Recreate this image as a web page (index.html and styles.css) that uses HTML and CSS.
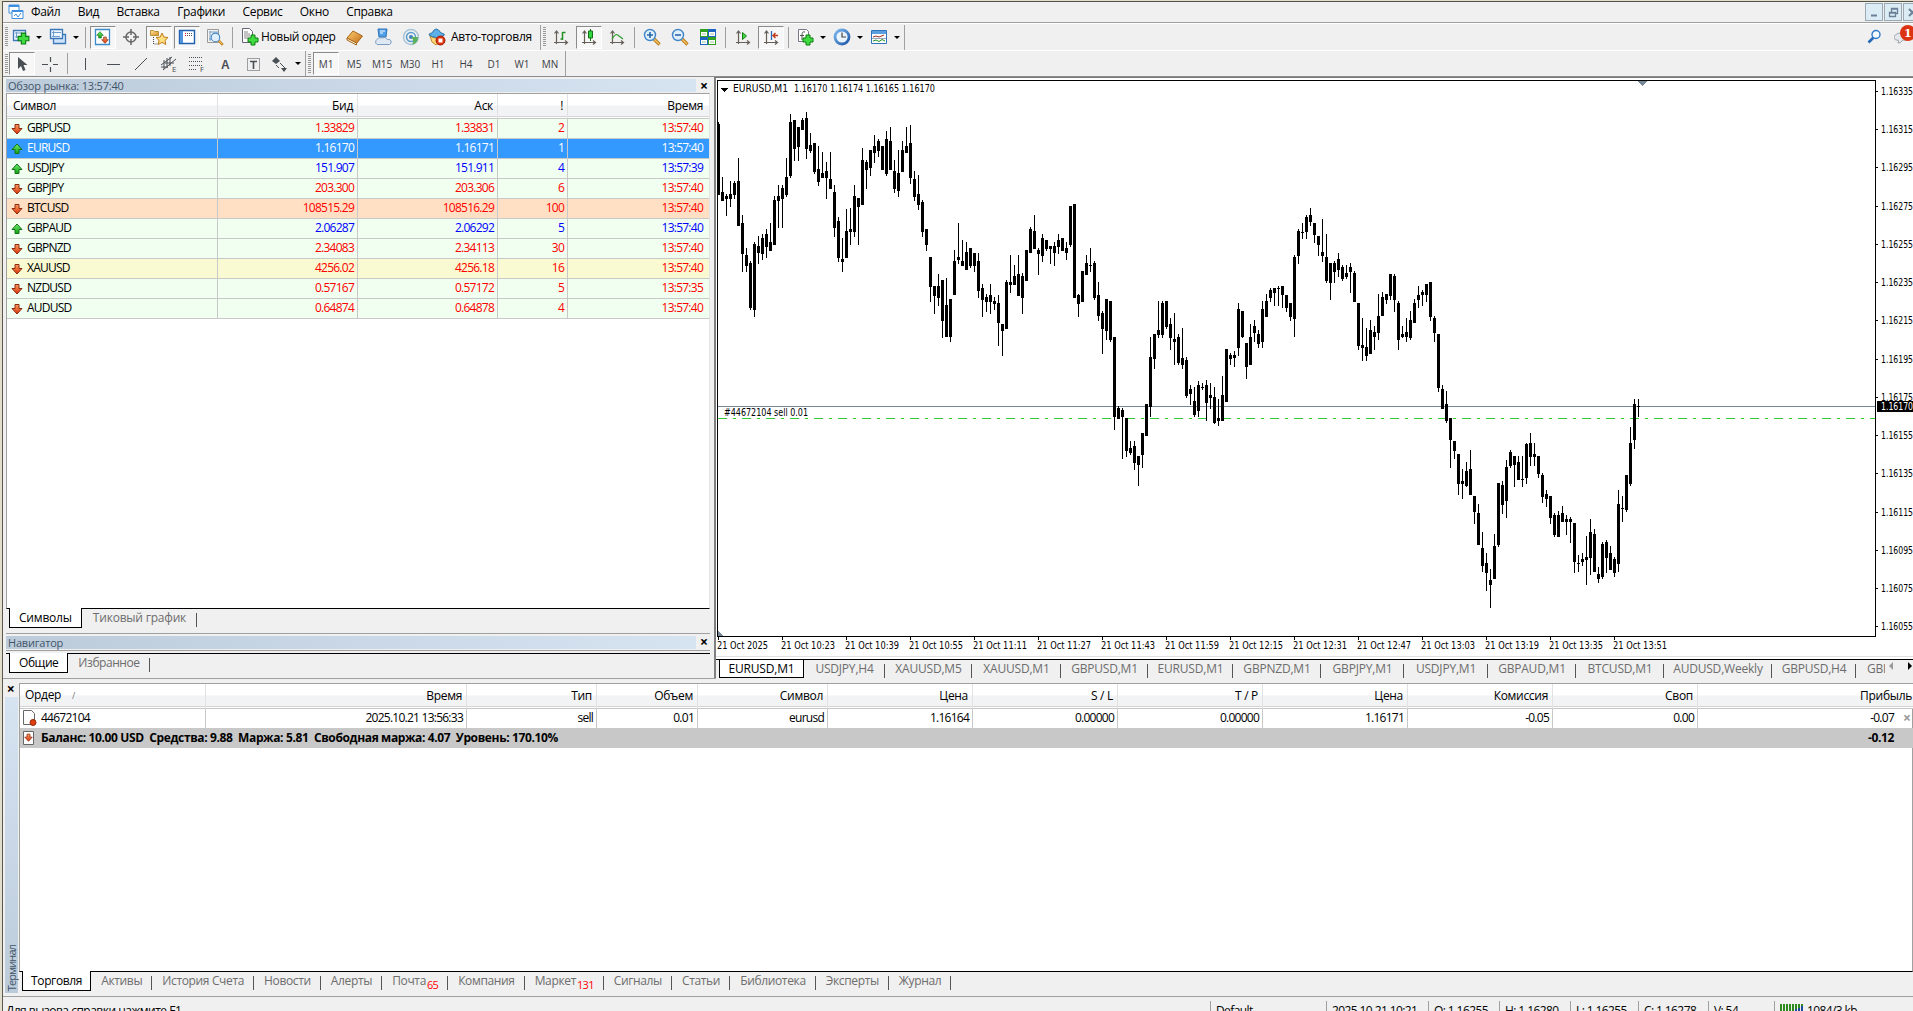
FILE: index.html
```html
<!DOCTYPE html>
<html lang="ru">
<head>
<meta charset="UTF-8" />
<title>Терминал</title>
<link rel="stylesheet" href="styles.css">
</head>
<body>

<svg class="defs" width="0" height="0">
  <defs>
    <linearGradient id="gRed" x1="0" y1="0" x2="0" y2="1"><stop offset="0" stop-color="#ffa060"/><stop offset="1" stop-color="#d83008"/></linearGradient>
    <linearGradient id="gGreen" x1="0" y1="0" x2="0" y2="1"><stop offset="0" stop-color="#70f070"/><stop offset="1" stop-color="#10a010"/></linearGradient>
    <linearGradient id="gGold" x1="0" y1="0" x2="1" y2="1"><stop offset="0" stop-color="#ffe9a0"/><stop offset="1" stop-color="#d88a20"/></linearGradient>
    <linearGradient id="gBook" x1="0" y1="0" x2="1" y2="1"><stop offset="0" stop-color="#ffd070"/><stop offset="1" stop-color="#c06a18"/></linearGradient>
    <linearGradient id="gBlue" x1="0" y1="0" x2="1" y2="1"><stop offset="0" stop-color="#7db8f0"/><stop offset="1" stop-color="#1c56a8"/></linearGradient>
    <symbol id="down" viewBox="0 0 12 12"><path d="M4 1.500h4v4h3L6 11 1 5.500h3z" fill="url(#gRed)" stroke="#8a2a10"/></symbol>
    <symbol id="up" viewBox="0 0 12 12"><path d="M4 10.500h4v-4h3L6 1 1 6.500h3z" fill="url(#gGreen)" stroke="#187018"/></symbol>
    <symbol id="plus" viewBox="0 0 12 12"><path d="M4 1h4v3h3v4H8v3H4V8H1V4h3z" fill="#3fdc3f" stroke="#0d7a12"/></symbol>
    <symbol id="axes" viewBox="0 0 18 18"><path d="M4.500 3v13M2 14.500h13M2.500 5.500l2-2.500 2 2.500M13 12.500l2.500 2-2.500 2" fill="none" stroke="#665f58" stroke-width="1.200"/></symbol>
    <symbol id="lens" viewBox="0 0 18 18"><path d="M10.500 10.500l6 6" stroke="#b87418" stroke-width="3.200"/><path d="M10.500 10.500l5.500 5.500" stroke="#f4c860" stroke-width="1.400"/><circle cx="7" cy="7" r="5.500" fill="#dff0fc" stroke="#3f86c8" stroke-width="1.400"/></symbol>
  </defs>
</svg>

<div class="app">
  <div class="menubar">
    <svg class="logo" width="16" height="16"><path d="M1 1h10v8H1z" fill="#fff" stroke="#3f8fe0"/><path d="M4 6.500h11v8H4z" fill="#fff" stroke="#3f8fe0"/><path d="M1 1h10v2H1zM4 6h11v2H4z" fill="#3f8fe0"/><path d="M6 12l2-2 2 3 3-4" fill="none" stroke="#3f8fe0"/></svg>
    <span>Файл</span><span>Вид</span><span>Вставка</span><span>Графики</span><span>Сервис</span><span>Окно</span><span>Справка</span>
    <div class="winbtns">
      <i><svg width="17" height="17"><path d="M5 11.500h6" stroke="#6a8098" stroke-width="2"/></svg></i>
      <i><svg width="17" height="17"><path d="M4.500 8.500h6v4h-6zM6.500 8V4.500h6v5H11M4.500 9h6M6.500 5h6" fill="none" stroke="#6a8098" stroke-width="1.300"/></svg></i>
      <i><svg width="17" height="17"><path d="M5 5l7 7M12 5l-7 7" stroke="#6a8098" stroke-width="2"/></svg></i>
    </div>
  </div>

  <div class="toolbar first">
    <i class="grip"></i>
    <b class="dd"><svg width="18" height="18"><path d="M1.500 2.500h12v10h-12z" fill="#eef6ff" stroke="#3c78b8" stroke-width="1.300"/><path d="M3 5h7M4.500 4v6M3 9h6" stroke="#6d9ccc"/><use href="#plus" x="5" y="4" width="13" height="13"/></svg></b>
    <b class="dd"><svg width="18" height="18"><path d="M4.500 6.500h12v9h-12z" fill="#cfe4fa" stroke="#3c78b8" stroke-width="1.300"/><path d="M1.500 1.500h12v9h-12z" fill="#eef6ff" stroke="#3c78b8" stroke-width="1.300"/><path d="M3 4.500h9M4.500 3v6M3 8.500h8" stroke="#6d9ccc"/></svg></b>
    <i class="sep"></i>
    <b class="tb on"><svg width="18" height="18"><path d="M1.500 1.500h14v15h-14z" fill="#fff" stroke="#3c8ccc" stroke-width="1.300"/><use href="#up" x="2" y="3" width="8" height="8"/><use href="#down" x="7" y="8" width="8" height="8"/></svg></b>
    <b class="tb"><svg width="18" height="18"><circle cx="9" cy="9" r="5" fill="none" stroke="#666" stroke-width="1.500"/><path d="M9 1v6M9 11v6M1 9h6M11 9h6" stroke="#666" stroke-width="1.500"/></svg></b>
    <b class="tb on"><svg width="20" height="18"><path d="M1.500 2.500h3l1 1h4v4h-8z" fill="url(#gGold)" stroke="#b8903c"/><path d="M4.500 9v7h5" fill="none" stroke="#444" stroke-dasharray="1 1"/><path d="M13 5l1.800 4 4.200.5-3 2.800.8 4.200L13 14.400 9.200 16.500l.8-4.200-3-2.800 4.200-.5z" fill="#ffdf80" stroke="#c07a18"/></svg></b>
    <b class="tb on"><svg width="18" height="18"><path d="M1.500 2.500h15v13h-15z" fill="#fff" stroke="#1f5fae" stroke-width="1.400"/><path d="M2 3h3v12H2z" fill="#4f94e0"/><path d="M7 5.500h8M7 7.500h8" stroke="#555" stroke-dasharray="1 1"/><path d="M7 5.500h1M7 7.500h1" stroke="#e02020" /></svg></b>
    <b class="tb"><svg width="18" height="18"><path d="M1.500 1.500h11v13h-11z" fill="#f4f4ec" stroke="#999"/><path d="M3 4h9M4 3v10M3 11h6" stroke="#7aa0d0"/><use href="#lens" x="4" y="4" width="14" height="14"/></svg></b>
    <i class="sep"></i>
    <b class="wide"><svg width="18" height="18"><path d="M1.500.5h7l3 3v11h-10z" fill="#fff" stroke="#667"/><path d="M3 4h4M3 6h6M3 8h6M3 10h4" stroke="#888"/><use href="#plus" x="6" y="6" width="12" height="12"/></svg>Новый ордер</b>
    <b class="tb"><svg width="18" height="18"><path d="M1 10l6-7 9.500 5-6 7.500z" fill="url(#gBook)" stroke="#a86418"/><path d="M1 10v2l9.500 5v-2z" fill="#fff4d0" stroke="#a86418"/></svg></b>
    <b class="tb"><svg width="18" height="18"><path d="M4 1h9l-1 8H5z" fill="#4fa0e8" stroke="#2f74b8"/><path d="M6 3h5M6 5h3" stroke="#fff"/><path d="M3 16.500a3 3 0 010-5q1.500-3 4.500-1.500 4-2 6 1.500a2.500 2.500 0 012 5z" fill="#e0e8f4" stroke="#7a9cc0"/></svg></b>
    <b class="tb"><svg width="18" height="18"><g fill="none"><circle cx="9" cy="9" r="7.500" stroke="#a8c4d8" stroke-width="1.500"/><circle cx="9" cy="9" r="4.500" stroke="#5c9ccc" stroke-width="1.500"/></g><circle cx="9" cy="9" r="2" fill="#3c80c0"/><path d="M9 9q4 3 1 8 6-2 6-8z" fill="#58b058"/></svg></b>
    <b class="auto"><svg width="18" height="18"><path d="M2 8q6 4 13 0l-2 6-5 3-4-3z" fill="#ffd878" stroke="#c08a28"/><path d="M1 7q0-2 3-2 4-8 9 0 3 0 3.500 2-8 5-15.500 0z" fill="#5fb0e8" stroke="#2f74a8"/><circle cx="12.500" cy="12.500" r="4.500" fill="#e03010" stroke="#a02008"/><path d="M10.500 10.500h4v4h-4z" fill="#fff"/></svg>Авто-торговля</b>
    <i class="end"></i><i class="grip"></i>
    <b class="tb"><svg width="18" height="18"><use href="#axes"/><path d="M10.500 4v8M10.500 11h-2M10.500 4.500h3" fill="none" stroke="#259025" stroke-width="1.500"/></svg></b>
    <b class="tb on"><svg width="18" height="18"><use href="#axes"/><path d="M10.500 1v12" stroke="#167016"/><path d="M8.500 3h4v7h-4z" fill="#30d840" stroke="#167016"/></svg></b>
    <b class="tb"><svg width="18" height="18"><use href="#axes"/><path d="M4 11q4-7 7-3l4 3" fill="none" stroke="#30a030" stroke-width="1.300"/></svg></b>
    <i class="sep"></i>
    <b class="tb"><svg width="18" height="18"><use href="#lens"/><path d="M4 7h6M7 4v6" stroke="#2868a8" stroke-width="1.600"/></svg></b>
    <b class="tb"><svg width="18" height="18"><use href="#lens"/><path d="M4 7h6" stroke="#2868a8" stroke-width="1.600"/></svg></b>
    <b class="tb"><svg width="18" height="18"><path d="M1 1h8v8H1zM9 9h8v8H9z" fill="#30a020"/><path d="M9 1h8v8H9zM1 9h8v8H1z" fill="#1f64c0"/><path d="M2 4h6v4H2zM10 4h6v4h-6zM2 12h6v4H2zM10 12h6v4h-6z" fill="#fff"/><path d="M3 6h4M11 6h4M3 14h4M11 14h4" stroke="#9bc49b"/></svg></b>
    <i class="sep"></i>
    <b class="tb"><svg width="18" height="18"><use href="#axes"/><path d="M8.500 4.500l4 3.500-4 3.500z" fill="#40d840" stroke="#168016"/></svg></b>
    <b class="tb on"><svg width="18" height="18"><use href="#axes"/><path d="M9.500 3v9" stroke="#2868b8" stroke-width="1.300"/><path d="M16 7.500h-4M13.500 5l-2.500 2.500 2.500 2.500" fill="none" stroke="#c03818" stroke-width="1.400"/></svg></b>
    <i class="sep"></i>
    <b class="dd"><svg width="18" height="18"><path d="M2.500 1.500h8l2 2v10h-10z" fill="#fff" stroke="#778"/><path d="M9 4q-3-1-3 3v5M4 7.500h4" fill="none" stroke="#555"/><use href="#plus" x="6" y="6" width="12" height="12"/></svg></b>
    <b class="dd"><svg width="18" height="18"><circle cx="9" cy="9" r="7" fill="#eaf4ff" stroke="url(#gBlue)" stroke-width="2.800"/><path d="M9 4.500V9h4" fill="none" stroke="#444" stroke-width="1.200"/></svg></b>
    <b class="dd"><svg width="18" height="18"><path d="M1.500 2.500h15v13h-15z" fill="#fff" stroke="#2f74b8"/><path d="M2 3h14v3H2z" fill="#5a9fe0"/><path d="M3 9l3-1 3 1 5-2" fill="none" stroke="#a03020"/><path d="M3 13l3-1 3 1.500 3-2 3 1.500" fill="none" stroke="#209020"/><path d="M2 10.500h14" stroke="#9ab"/></svg></b>
    <i class="end"></i>
    <div class="notify">
      <svg width="16" height="16"><path d="M1.500 13.500l5-5" stroke="#2468b8" stroke-width="2.600"/><circle cx="9" cy="5.500" r="4" fill="#f6faff" stroke="#2f78c8" stroke-width="1.400"/></svg>
      <svg class="chat" width="24" height="24"><path d="M0 15q0-4 6-5h7v7H9q-3 4-5 3l.5-2.500Q0 17 0 15z" fill="#e4e8ee" stroke="#a0a4aa"/><circle cx="14" cy="10" r="8" fill="#dc3412"/><text x="10" y="14" class="badge">1</text></svg>
    </div>
  </div>

  <div class="toolbar second">
    <i class="grip"></i>
    <b class="tb on"><svg width="18" height="18"><path d="M5 2v12l3-3 2 5 2.500-1-2-5h4z" fill="#4a4f55"/></svg></b>
    <b class="tb"><svg width="18" height="18"><path d="M9.500 2v5M9.500 12v5M1 9.500h6M12 9.500h5" stroke="#4a4f55" stroke-width="1.200"/></svg></b>
    <i class="sep"></i>
    <b class="tb"><svg width="18" height="18"><path d="M9.500 3v12" stroke="#4a4f55"/></svg></b>
    <b class="tb"><svg width="18" height="18"><path d="M3 9.500h13" stroke="#4a4f55"/></svg></b>
    <b class="tb"><svg width="18" height="18"><path d="M3 15L15 3" stroke="#4a4f55"/></svg></b>
    <b class="tb"><svg width="18" height="18"><path d="M1 10l11-8M3 15L16 4M4 5v9M7 3v10M10 2v9M1 12h7M5 8h9" stroke="#4a4f55"/><text x="12" y="17" class="mini">E</text></svg></b>
    <b class="tb"><svg width="18" height="18"><path d="M1 2.500h14M1 6.500h14M1 10.500h14M1 14.500h8" stroke="#4a4f55" stroke-dasharray="1 1"/><text x="12" y="17" class="mini">F</text></svg></b>
    <b class="tb"><svg width="18" height="18"><text x="5" y="14" class="glyph">A</text></svg></b>
    <b class="tb"><svg width="18" height="18"><path d="M3.500 3.500h12v12h-12z" fill="none" stroke="#4a4f55" stroke-dasharray="1 1"/><path d="M6 6.500h7M9.500 6v8" stroke="#4a4f55" stroke-width="1.600"/></svg></b>
    <b class="dd"><svg width="18" height="18"><path d="M1 6l4-4 4 4-4 3zM10 13h6l-3 4z" fill="#4a4f55"/><path d="M5 10l3 3M9 8l5 5" stroke="#4a4f55"/></svg></b>
    <i class="end"></i><i class="grip"></i>
    <b class="tb on">M1</b><b class="tb">M5</b><b class="tb">M15</b><b class="tb">M30</b><b class="tb">H1</b><b class="tb">H4</b><b class="tb">D1</b><b class="tb">W1</b><b class="tb">MN</b>
    <i class="end"></i>
  </div>

  <div class="workspace">
    <div class="dock">
      <div class="caption"><span>Обзор рынка: 13:57:40</span><em>×</em></div>
      <div class="watch">
        <table>
          <colgroup><col class="w1"><col class="w2"><col class="w2"><col class="w3"><col class="w4"></colgroup>
          <thead><tr><th>Символ</th><th>Бид</th><th>Аск</th><th>!</th><th>Время</th></tr></thead>
          <tbody id="quotes"></tbody>
        </table>
      </div>
      <div class="tabs"><span class="active">Символы</span><span>Тиковый график</span></div>
      <div class="caption nav"><span>Навигатор</span><em>×</em></div>
      <div class="tabs navtabs"><span class="active">Общие</span><span>Избранное</span></div>
    </div>

    <div class="chartpane">
      <svg id="chart" width="1197" height="581" viewBox="716 78 1197 581"></svg>
      <div class="tabs charttabs">
        <span class="active">EURUSD,M1</span><span>USDJPY,H4</span><span>XAUUSD,M5</span><span>XAUUSD,M1</span><span>GBPUSD,M1</span><span>EURUSD,M1</span><span>GBPNZD,M1</span><span>GBPJPY,M1</span><span>USDJPY,M1</span><span>GBPAUD,M1</span><span>BTCUSD,M1</span><span>AUDUSD,Weekly</span><span>GBPUSD,H4</span><span>GBPUSD</span>
        <div class="scroller"><svg width="28" height="12"><path d="M8 1v8L4 5z" fill="#999"/><path d="M23 1v8l4-4z" fill="#000"/></svg></div>
      </div>
    </div>
  </div>

  <div class="terminal">
    <div class="side"><em>×</em><div><span>Терминал</span></div></div>
    <div class="orders">
      <div class="grid">
        <table>
          <colgroup><col class="t1"><col class="t2"><col class="t3"><col class="t4"><col class="t3"><col class="t5"><col class="t5"><col class="t5"><col class="t5"><col class="t5"><col class="t5"><col class="t6"></colgroup>
          <thead><tr><th>Ордер <i class="sort">/</i></th><th>Время</th><th>Тип</th><th>Объем</th><th>Символ</th><th>Цена</th><th>S / L</th><th>T / P</th><th>Цена</th><th>Комиссия</th><th>Своп</th><th>Прибыль</th></tr></thead>
          <tbody>
            <tr><td><svg width="16" height="16"><path d="M1.500.5h8l3 3v11h-11z" fill="#fff" stroke="#666"/><circle cx="11" cy="12.500" r="3" fill="#e04010" stroke="#902808"/></svg>44672104</td><td>2025.10.21 13:56:33</td><td>sell</td><td>0.01</td><td>eurusd</td><td>1.16164</td><td>0.00000</td><td>0.00000</td><td>1.16171</td><td>-0.05</td><td>0.00</td><td>-0.07<em>×</em></td></tr>
            <tr class="balance"><td colspan="11"><svg width="16" height="16"><path d="M1.500 1.500h10v13h-10z" fill="#fff" stroke="#666"/><use href="#down" x="2" y="3" width="9" height="9"/></svg>Баланс: 10.00 USD&nbsp; Средства: 9.88&nbsp; Маржа: 5.81&nbsp; Свободная маржа: 4.07&nbsp; Уровень: 170.10%</td><td>-0.12</td></tr>
          </tbody>
        </table>
      </div>
      <div class="tabs termtabs">
        <span class="active">Торговля</span><span>Активы</span><span>История Счета</span><span>Новости</span><span>Алерты</span><span>Почта<sub>65</sub></span><span>Компания</span><span>Маркет<sub>131</sub></span><span>Сигналы</span><span>Статьи</span><span>Библиотека</span><span>Эксперты</span><span>Журнал</span>
      </div>
    </div>
  </div>

  <div class="status">
    <span>Для вызова справки нажмите F1</span><span>Default</span><span>2025.10.21 10:21</span><span>O: 1.16255</span><span>H: 1.16280</span><span>L: 1.16255</span><span>C: 1.16278</span><span>V: 54</span>
    <span><svg width="24" height="16"><path d="M1 0v12M4 0v12M7 0v12M10 0v12M13 0v8M16 0v6M19 0v4M22 0v2" stroke="#2f8a1f" stroke-width="2"/><path d="M10 9v4M13 7v6M16 5v8M19 4v9M22 2v11" stroke="#1f4a9a" stroke-width="2"/></svg>1084/3 kb</span>
  </div>
</div>

<script src="chart.js"></script>
</body>
</html>
```
FILE: styles.css
```css
* { box-sizing: border-box; }

html { background: #e2dece; }
body {
  margin: 0;
  width: 1913px;
  height: 1011px;
  overflow: hidden;
  font: 12px/16px "Open Sans", "Noto Sans", sans-serif;
  letter-spacing: -0.3px;
  color: #000;
}

.defs { position: absolute; }
i, em { font-style: normal; }
b { font-weight: normal; }

.app {
  display: flex;
  flex-direction: column;
  height: 1020px;
  background: #f0f0f0;
  border-top: 1px solid #55524a;
  border-left: 1px solid #5c584e;
  margin: 1px 0 0 2px;
}

/* Меню */
.menubar {
  display: flex;
  align-items: center;
  height: 21px;
  flex: none;
  padding-left: 5px;
  border-bottom: 1px solid #a0a0a0;
}
.logo { margin-right: 7px; }
.menubar span { margin-right: 17.500px; letter-spacing: -0.35px; }
.winbtns { display: flex; gap: 1px; margin-left: auto; margin-right: -8px; }
.winbtns i {
  width: 18px;
  height: 18px;
  background: #dcecf5;
  border: 1px solid #9aa8b4;
}
.winbtns svg { display: block; }

/* Панели инструментов */
.toolbar {
  display: flex;
  align-items: center;
  flex: none;
  border-top: 1px solid #fff;
}
.first { height: 27px; }
.second { height: 27px; border-bottom: 1px solid #8c8c8c; }
.grip {
  width: 3px;
  height: 20px;
  margin: 0 1px 0 2px;
  background: repeating-linear-gradient(#999 0 1px, #f0f0f0 1px 2px);
}
.tb, .wide, .auto, .dd {
  display: flex;
  align-items: center;
  justify-content: center;
  height: 24px;
  width: 28px;
  flex: none;
}
.tb svg, .wide svg, .auto svg, .dd svg { flex: none; }
.on {
  width: 26px;
  margin: 0 1px;
  height: 23px;
  border: 1px solid;
  border-color: #8c8c8c #fff #fff #8c8c8c;
  background: #f7f7f7;
}
.dd { width: 37px; justify-content: flex-start; padding-left: 4px; }
.dd::after {
  content: "";
  margin-left: 6px;
  border: 3px solid transparent;
  border-top-color: #000;
  border-bottom: 0;
}
.first .wide { width: 105px; justify-content: flex-start; padding-left: 5px; gap: 2px; letter-spacing: -0.35px; }
.first .auto { width: 114px; justify-content: flex-start; padding-left: 3px; gap: 5px; letter-spacing: -0.25px; }
.wide, .auto { white-space: nowrap; }
.sep { width: 1px; height: 21px; margin: 0 3px; background: #a0a0a0; }
.end { width: 1px; height: 25px; background: #a0a0a0; margin-left: 1px; }
.first .grip:first-child, .second .grip:first-child { margin-right: 0; }
.second .tb { font-size: 10px; color: #3c4046; letter-spacing: -0.1px; }
.mini { font: 7px "DejaVu Sans", sans-serif; fill: #4a4f55; }
.glyph { font: bold 12px "Liberation Sans", sans-serif; fill: #4a4f55; }
.notify { display: flex; align-items: center; gap: 11px; margin-left: auto; margin-right: -5px; }
.chat { margin-top: -4px; }
.badge { font: bold 11px "DejaVu Serif", serif; fill: #fff; }

/* Рабочая область */
.workspace { display: flex; height: 601px; flex: none; }
.dock {
  width: 711px;
  padding: 2px 4px 0 3px;
  display: flex;
  flex-direction: column;
}
.caption {
  display: flex;
  align-items: center;
  height: 13px;
  flex: none;
  color: #3f5468;
  letter-spacing: -0.2px;
  font-size: 11px;
}
.caption span {
  width: 690px;
  height: 13px;
  line-height: 13px;
  padding-left: 2px;
  background: linear-gradient(90deg, #bccbda, #d6e4f2);
}
em { font-weight: bold; font-size: 14px; color: #000; line-height: 12px; }
.caption em { margin-left: 4px; }

.watch {
  height: 516px;
  flex: none;
  margin-top: 1px;
  border: 1px solid #a0a0a0;
  border-right-color: #e4e4e4;
  border-bottom: 1px solid #000;
  background: #fff;
}
table { border-collapse: separate; border-spacing: 0; table-layout: fixed; }
.watch table { width: 702px; }
.w1 { width: 211px; } .w2 { width: 140px; } .w3 { width: 70px; } .w4 { width: 141px; }
th {
  height: 25px;
  padding: 0 4px 1px;
  font-weight: normal;
  text-align: right;
  border-right: 1px solid #e2e2e2;
  border-bottom: 1px solid #c8c8c8;
  background: linear-gradient(#fff 45%, #f2f3f5 50%, #f2f3f5 22px, #d5d5d5 22px, #d5d5d5 23px, #fff 23px);
}
th:first-child { text-align: left; padding-left: 6px; }
td {
  height: 20px;
  padding: 0 3px 1px;
  text-align: right;
  white-space: nowrap;
  border-right: 1px solid #c8c8c8;
  border-bottom: 1px solid #c8c8c8;
  letter-spacing: -0.75px;
}
td:first-child { text-align: left; color: #000; }
td:last-child, th:last-child { border-right: 0; padding-right: 6px; }
td svg { vertical-align: middle; }
.watch td { background: #f0fff0; color: #f00; }
.watch td:first-child { padding-left: 4px; color: #000; }
.watch td svg { margin: 1px 4px 0 0; }
.watch tr.rise td:not(:first-child) { color: #00f; }
.watch tr.btc td { background: #ffe0c4; }
.watch tr.gold td { background: #fafad2; }
.watch tbody tr.selected td,
.watch tbody tr.selected td:first-child { background: #3399ff; color: #fff; }

/* Вкладки */
.tabs { display: flex; height: 24px; flex: none; color: #6d6d6d; padding-left: 3px; }
.tabs span {
  position: relative;
  height: 19px;
  line-height: 18px;
  padding: 0 11px;
  white-space: nowrap;
  letter-spacing: -0.2px;
}
.tabs span:not(.active)::after {
  content: "";
  position: absolute;
  right: 0;
  top: 4px;
  height: 14px;
  border-right: 1px solid #555;
}
.tabs .active {
  margin-top: -1px;
  height: 20px;
  line-height: 19px;
  padding: 0 9px;
  color: #000;
  background: #fff;
  border: 1px solid #000;
  border-top: 0;
}
.nav { height: 18px; padding: 2px 0; border: solid #a0a0a0; border-width: 1px 0; }
.navtabs { margin-top: 2px; border-top: 1px solid #000; height: 25px; }
.navtabs span { padding: 0 10px; letter-spacing: -0.45px; }

/* График */
.chartpane {
  width: 1199px;
  border-left: 2px solid #808080;
  background: #fff;
  border-top: 1px solid #777;
}
#chart { display: block; }
#chart text { font-family: "DejaVu Sans Condensed", "DejaVu Sans", sans-serif; font-size: 10px; font-stretch: condensed; letter-spacing: 0; }
.charttabs { position: relative; background: #f0f0f0; border-top: 1px solid #000; padding-left: 3px; height: 20px; overflow: hidden; }
.charttabs span { text-align: center; padding: 0; flex: none; }
.charttabs .active { padding: 0; width: 85px; margin-top: 0; height: 18px; line-height: 18px; }
.charttabs span:nth-child(2) { width: 81px; }
.charttabs span:nth-child(3) { width: 87px; }
.charttabs span:nth-child(4) { width: 89px; }
.charttabs span:nth-child(5) { width: 87px; }
.charttabs span:nth-child(6) { width: 85px; }
.charttabs span:nth-child(7) { width: 88px; }
.charttabs span:nth-child(8) { width: 83px; }
.charttabs span:nth-child(9) { width: 84px; }
.charttabs span:nth-child(10), .charttabs span:nth-child(11) { width: 88px; }
.charttabs span:nth-child(12) { width: 108px; }
.charttabs span:nth-child(13) { width: 84px; }
.charttabs span:nth-child(14) { width: 70px; text-align: left; padding-left: 11px; }
.scroller { position: absolute; right: 0; top: 1px; width: 28px; height: 16px; background: #f0f0f0; }

/* Терминал */
.terminal { display: flex; height: 318px; flex: none; border-top: 1px solid #a0a0a0; padding-top: 4px; }
.side { width: 16px; padding: 0 1px 0 2px; display: flex; flex-direction: column; }
.side em { height: 14px; text-align: center; margin-left: -2px; }
.side div {
  flex: 1;
  display: flex;
  align-items: flex-end;
  padding-bottom: 2px;
  margin-bottom: 3px;
  background: linear-gradient(#d6e4f2, #bccbda);
}
.side span {
  writing-mode: vertical-rl;
  transform: rotate(180deg);
  font-size: 11px;
  line-height: 13px;
  letter-spacing: -0.9px;
  color: #3f5468;
}
.orders { width: 1894px; overflow: hidden; }
.grid { height: 289px; border: 1px solid #a0a0a0; border-bottom-color: #000; background: #fff; }
.grid table { width: 1920px; }
.t1 { width: 186px; } .t2 { width: 261px; } .t3 { width: 130px; } .t4 { width: 101px; } .t5 { width: 145px; } .t6 { width: 242px; }
.grid td { height: 19px; border-bottom: 0; }
.grid th:first-child { padding-left: 5px; }
.grid td:first-child { padding-left: 2px; }
.grid td svg { margin: 0 3px 0 0; }
.grid td:last-child { padding-right: 46px; }
.grid th:last-child { padding-right: 28px; }
.grid td em { position: absolute; margin-left: 9px; color: #999; line-height: 16px; }
.sort { color: #777; font-size: 9px; margin-left: 8px; }
.grid .balance td { height: 20px; padding-bottom: 0; background: #c8c8c8; border: 0; font-weight: bold; letter-spacing: -0.37px; }
.termtabs span { padding: 0 10px; letter-spacing: -0.35px; }
.termtabs .active { padding: 0 8px; }
.termtabs sub { color: #f00; font-size: 11px; line-height: 0; vertical-align: -4px; letter-spacing: -0.7px; margin-left: 1px; }

/* Строка состояния */
.status {
  display: flex;
  flex: none;
  height: 24px;
  padding: 4px 0 0 3px;
  border-top: 1px solid #a0a0a0;
}
.status span { height: 18px; line-height: 19px; padding-left: 5px; border-left: 1px solid #a0a0a0; white-space: nowrap; letter-spacing: -0.6px; }
.status span:nth-child(1) { width: 1204px; padding-left: 0; border: 0; letter-spacing: -0.5px; }
.status span:nth-child(2) { width: 116px; }
.status span:nth-child(3) { width: 102px; }
.status span:nth-child(4), .status span:nth-child(5) { width: 71px; }
.status span:nth-child(6) { width: 68px; }
.status span:nth-child(7) { width: 70px; }
.status span:nth-child(8) { width: 66px; }
.status svg { vertical-align: top; margin: 3px 3px 0 0; }
```
FILE: chart.js
```js
// Котировки: символ, бид, аск, спред, время, направление, класс строки
const quotes = [
  ['GBPUSD', '1.33829', '1.33831', 2, '13:57:40', 'down', ''],
  ['EURUSD', '1.16170', '1.16171', 1, '13:57:40', 'up', 'selected'],
  ['USDJPY', '151.907', '151.911', 4, '13:57:39', 'up', 'rise'],
  ['GBPJPY', '203.300', '203.306', 6, '13:57:40', 'down', ''],
  ['BTCUSD', '108515.29', '108516.29', 100, '13:57:40', 'down', 'btc'],
  ['GBPAUD', '2.06287', '2.06292', 5, '13:57:40', 'up', 'rise'],
  ['GBPNZD', '2.34083', '2.34113', 30, '13:57:40', 'down', ''],
  ['XAUUSD', '4256.02', '4256.18', 16, '13:57:40', 'down', 'gold'],
  ['NZDUSD', '0.57167', '0.57172', 5, '13:57:35', 'down', ''],
  ['AUDUSD', '0.64874', '0.64878', 4, '13:57:40', 'down', '']
];

document.getElementById('quotes').innerHTML = quotes.map(q =>
  `<tr class="${q[6]}"><td><svg width="12" height="12"><use href="#${q[5]}"/></svg>${q[0]}</td>` +
  q.slice(1, 5).map(v => `<td>${v}</td>`).join('') + '</tr>').join('');

// Свечи по часам: high, верх тела, низ тела, low (пиксели от base)
const series = [
  { base: 70, bars: `52,54,125,125 107,122,131,131 124,126,129,146 111,124,129,137 111,113,125,129 88,111,156,156 145,153,184,202 178,185,196,202 191,193,238,240 172,174,240,247
166,176,183,194 164,168,184,190 159,164,177,188 153,172,181,181 126,130,175,175 115,126,131,158 115,118,129,158 88,107,125,127 44,52,106,108 50,50,79,91
57,57,77,91 48,50,60,60 42,48,79,89 63,75,81,83 73,73,102,104 76,99,112,116 82,103,108,108 92,101,108,129 82,109,119,119 115,122,158,167
147,151,188,192 168,189,192,202 139,161,188,188 138,159,162,175 115,126,162,167 128,128,137,175 78,90,135,135 90,92,100,119 80,80,98,106 65,76,83,93
69,71,81,87 76,76,100,100 61,69,104,106 57,71,100,100 90,101,119,123 80,103,121,127 71,80,102,102 57,76,83,83 55,73,108,114 101,109,127,131
105,124,135,140 130,132,162,167 159,159,175,181 187,187,217,232 216,216,226,244 204,216,228,236 210,210,251,268 208,235,267,267 229,229,267,272 180,191,225,225
153,187,190,194 170,191,196,196 172,182,200,200 178,178,196,198 183,183,196,202 183,191,221,228 214,218,230,247 224,227,232,242 214,225,232,244 227,231,234,240
225,233,253,276 254,254,261,286 210,212,259,259 185,212,215,223 195,206,215,215 185,204,226,226 203,206,228,244 180,180,211,211 157,159,183,183 145,161,179,179
178,180,184,205 164,168,186,192 170,170,179,181 176,176,179,194 172,176,183,196 164,170,177,184 168,168,181,181 172,178,183,190 136,136,175,177 134,134,228,228
224,225,234,247 201,201,232,232 185,193,205,205 178,195,196,202 191,193,228,230 212,225,246,251 241,243,259,284 229,229,261,270` },
  { base: 190, bars: `111,111,150,152 147,147,227,240 216,218,229,229 218,220,227,269 228,228,261,267 251,258,263,265 251,256,273,280 266,266,275,296 243,243,265,278 214,214,246,246
147,167,217,227 144,144,169,179 111,140,145,148 111,113,145,148 111,111,137,139 128,134,148,160 123,149,152,175 144,147,173,175 138,168,175,179 167,170,206,208
195,199,204,215 197,211,225,227 191,195,221,227 193,197,198,200 190,195,213,231 193,205,208,219 197,207,233,234 209,228,231,236 186,205,231,231 159,159,212,212
163,165,169,175 161,165,168,177 113,119,158,166 121,121,147,148 153,153,177,189 134,147,175,175 130,136,143,152 140,144,154,158 111,119,152,158 104,111,127,127
98,100,108,112 98,98,103,116 96,98,99,116 96,96,105,118 105,105,118,122 113,113,127,131 65,67,129,147 39,41,66,74 33,42,43,49 25,27,42,49
18,25,32,36 33,33,45,53 46,46,55,66 29,62,66,72 44,67,91,93 73,73,93,110 71,73,82,93 63,69,80,87 75,77,89,91 75,83,87,89
73,77,82,103 81,83,112,112 113,113,156,160 128,155,158,171 138,157,166,171 130,140,164,164 136,142,147,160 104,126,143,150 102,107,126,126 104,104,110,114
84,84,106,110 84,86,110,122 111,113,150,160 136,144,147,148 128,142,147,152 121,130,148,150 109,113,133,133 96,105,110,118 100,102,105,116 94,94,105,112
92,92,127,131 126,128,143,152 144,144,198,202 195,199,219,219 201,214,231,233 228,228,250,278 251,251,261,269 264,264,294,305 279,291,294,309 272,281,296,297
260,279,305,305 306,306,322,334 314,323,355,355 342,358,376,382 363,373,383,401 379,390,395,418 344,356,389,389 293,293,355,357` },
  { base: 380, bars: `101,105,125,134 80,87,121,138 70,72,86,88 76,76,85,107 76,82,100,100 76,99,100,107 63,64,98,104 53,63,77,86 63,74,77,86 76,76,94,98
93,95,117,123 110,114,119,127 116,116,138,144 133,135,155,157 131,135,157,157 126,133,142,142 135,139,142,155 137,139,142,163 143,143,182,193 175,183,184,192
173,179,182,186 156,177,180,205 139,152,178,195 149,154,192,192 187,194,199,203 162,164,197,199 160,162,178,193 166,173,190,190 177,179,193,197 110,124,184,192
116,128,129,142 95,95,130,132 47,63,104,106 19,24,60,69 19,26,27,37` }
];

function label(x, y, width, text, fill) {
  return `<text x="${x}" y="${y}" textLength="${width}" lengthAdjust="spacingAndGlyphs" fill="${fill || '#000'}">${text}</text>`;
}

let out = '<g shape-rendering="crispEdges">';
out += '<path d="M717 80.5H1875.5V636.500H717.500V80" fill="none" stroke="#000"/>';
out += '<path d="M718 406.500H1875" stroke="#778899"/>';
out += '<path d="M718 418.500H1875" stroke="#32cd32" stroke-dasharray="9 6 3 6"/>';

let x = 718;
let d = '';
for (const s of series) {
  for (const bar of s.bars.split(/\s+/)) {
    const [hi, top, bottom, lo] = bar.split(',').map(Number);
    d += `M${x} ${s.base + hi}h1v${lo - hi}h-1z`;
    d += `M${x - 1} ${s.base + top}h3v${bottom - top}h-3z`;
    x += 4;
  }
}
out += `<path d="${d}"/>`;
out += '<path d="M721 88h7l-3.500 4z"/><path d="M1638 81h9l-4.500 5z" fill="#778899"/><path d="M718 631v5h5z" fill="#778899"/>';

// Шкала цены
let scale = '';
for (let i = 0; i < 15; i++) {
  const y = Math.round(91 + i * 38.24);
  out += `<path d="M1876 ${y}.5h2" stroke="#000"/>`;
  scale += label(1881, y + 4, 32, ((116335 - i * 20) / 100000).toFixed(5));
}
// Шкала времени
const times = ['2025', '10:23', '10:39', '10:55', '11:11', '11:27', '11:43', '11:59', '12:15', '12:31', '12:47', '13:03', '13:19', '13:35', '13:51'];
times.forEach((t, i) => {
  out += `<path d="M${718 + i * 64}.5 637v3" stroke="#000"/>`;
  scale += label(717 + i * 64, 649, i ? 54 : 51, '21 Oct ' + t);
});
out += '</g>' + scale;
out += '<path d="M1877 401h36v11h-36z"/>' + label(1881, 410, 32, '1.16170', '#fff');
out += label(733, 92, 55, 'EURUSD,M1') + label(794, 92, 141, '1.16170 1.16174 1.16165 1.16170');
out += label(724, 416, 84, '#44672104 sell 0.01');
out += '<path d="M716 656.500h1197" stroke="#e0e0e0"/>';

document.getElementById('chart').innerHTML = out;
```
